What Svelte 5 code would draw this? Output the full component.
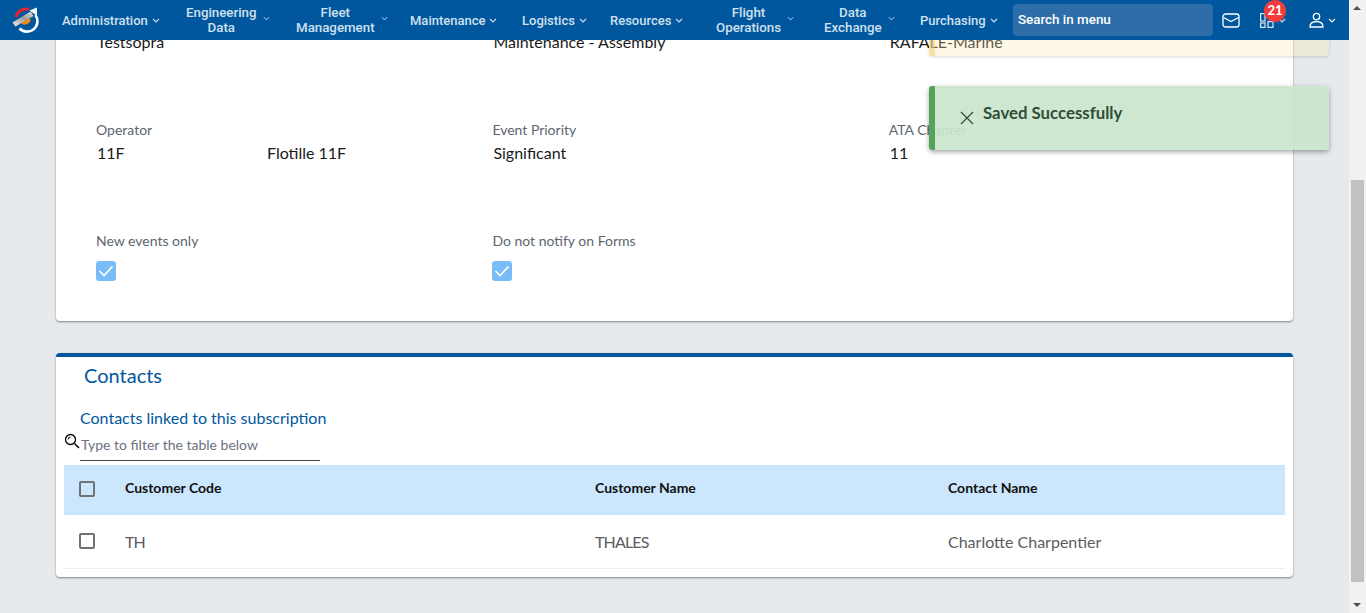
<script>
  const nav = [
    { l: ['Administration'], w: 124 },
    { l: ['Engineering', 'Data'], w: 110 },
    { l: ['Fleet', 'Management'], w: 114 },
    { l: ['Maintenance'], w: 112 },
    { l: ['Logistics'], w: 88 },
    { l: ['Resources'], w: 106 },
    { l: ['Flight', 'Operations'], w: 108 },
    { l: ['Data', 'Exchange'], w: 96 },
    { l: ['Purchasing'], w: 93 }
  ];
</script>

<div class="root">
  <div class="page">
    <header class="nav">
      <svg class="logo" viewBox="10 4 30 30" width="30" height="30">
        <defs>
          <linearGradient id="band" x1="0" y1="1" x2="1" y2="0">
            <stop offset="0" stop-color="#f2f2f2"/>
            <stop offset=".55" stop-color="#9a9a98"/>
            <stop offset="1" stop-color="#e4e6e8"/>
          </linearGradient>
        </defs>
        <path d="M16 16A10.5 10.5 0 0 1 29 8.3" fill="none" stroke="#e8212e" stroke-width="3"/>
        <path d="M19.5 27.5A10.5 10.5 0 0 0 35.5 14" fill="none" stroke="#fff" stroke-width="2.6"/>
        <ellipse cx="26" cy="20.5" rx="4.8" ry="2.7" fill="#f58a12" transform="rotate(-22 26 20.5)"/>
        <path d="M12.5 21.5L30.5 10.5 33.5 15 15.5 25.5Z" fill="url(#band)"/>
        <path d="M29.5 9.5L37 6.5 37 15Z" fill="#f2f4f6"/>
      </svg>
      <nav class="menu">
        {#each nav as n}
          <div class="item" class:two={n.l.length > 1} style="width: {n.w}px">
            <span class="label">{#each n.l as t}<span>{t}</span>{/each}</span>
            <svg class="chev" viewBox="0 0 8 5" width="8" height="5"><path d="M1 1l3 3 3-3" fill="none" stroke="currentColor" stroke-width="1.1"/></svg>
          </div>
        {/each}
      </nav>
      <div class="search">Search in menu</div>
      <div class="icons">
        <svg class="mail" viewBox="0 0 18 15" width="18" height="15"><rect x="1" y="1" width="16" height="13" rx="2.5" fill="none" stroke="#fff" stroke-width="1.3"/><path d="M1.5 4.5L9 8.5l7.5-4" fill="none" stroke="#fff" stroke-width="1.3"/></svg>
        <div class="apps">
          <svg viewBox="0 0 14 16" width="14" height="16"><g fill="none" stroke="#dce8f2" stroke-width="1.2"><rect x=".6" y="1.6" width="4.4" height="7.4"/><rect x=".6" y="11" width="4.4" height="4.4"/><rect x="8" y="9.6" width="5" height="5.8"/></g></svg>
          <svg class="chev c2" viewBox="0 0 8 5" width="8" height="5"><path d="M1 1l3 3 3-3" fill="none" stroke="currentColor" stroke-width="1.1"/></svg>
          <span class="badge">21</span>
        </div>
        <div class="user">
          <svg viewBox="0 0 15 16" width="15" height="16"><circle cx="7.5" cy="4.5" r="3.2" fill="none" stroke="#fff" stroke-width="1.3"/><path d="M1 15c0-4 2.5-5.5 6.5-5.5S14 11 14 15z" fill="none" stroke="#fff" stroke-width="1.3"/></svg>
          <svg class="chev" viewBox="0 0 8 5" width="8" height="5"><path d="M1 1l3 3 3-3" fill="none" stroke="#fff" stroke-width="1.2"/></svg>
        </div>
      </div>
    </header>

    <main class="content">
      <section class="card top">
        <div class="grid">
          <div class="field">
            <div class="label-f">&nbsp;</div>
            <div class="val">Testsopra</div>
          </div>
          <div class="field">
            <div class="label-f">&nbsp;</div>
            <div class="val">Maintenance - Assembly</div>
          </div>
          <div class="field">
            <div class="label-f">&nbsp;</div>
            <div class="val">RAFALE-Marine</div>
          </div>

          <div class="field">
            <div class="label-f">Operator</div>
            <div class="val pair"><span>11F</span><span>Flotille 11F</span></div>
          </div>
          <div class="field">
            <div class="label-f">Event Priority</div>
            <div class="val">Significant</div>
          </div>
          <div class="field">
            <div class="label-f">ATA Chapter</div>
            <div class="val">11</div>
          </div>

          <div class="field">
            <div class="label-f">New events only</div>
            <div class="check"><svg viewBox="0 0 20 20" width="20" height="20"><path d="M3.5 10l4.5 4.5 8.5-9" fill="none" stroke="#fff" stroke-width="1.7"/></svg></div>
          </div>
          <div class="field">
            <div class="label-f">Do not notify on Forms</div>
            <div class="check"><svg viewBox="0 0 20 20" width="20" height="20"><path d="M3.5 10l4.5 4.5 8.5-9" fill="none" stroke="#fff" stroke-width="1.7"/></svg></div>
          </div>
        </div>
      </section>

      <section class="card contacts">
        <h2>Contacts</h2>
        <h3>Contacts linked to this subscription</h3>
        <div class="filter">
          <svg class="lens" viewBox="0 0 16 16" width="16" height="16"><circle cx="6.5" cy="6.5" r="5" fill="none" stroke="#000" stroke-width="1.3"/><path d="M10.5 10.5L15 15" stroke="#000" stroke-width="1.6"/><path d="M4 6.5a2.5 2.5 0 0 1 2.5-2.5" fill="none" stroke="#000" stroke-width="1"/></svg>
          <div class="input">Type to filter the table below</div>
        </div>
        <div class="table">
          <div class="row head">
            <div class="c0"><span class="box"></span></div>
            <div class="c1">Customer Code</div>
            <div class="c2c">Customer Name</div>
            <div class="c3">Contact Name</div>
          </div>
          <div class="row body">
            <div class="c0"><span class="box"></span></div>
            <div class="c1 caps">TH</div>
            <div class="c2c caps">THALES</div>
            <div class="c3">Charlotte Charpentier</div>
          </div>
        </div>
      </section>
    </main>

    <div class="toast warn"></div>
    <div class="toast ok">
      <svg viewBox="0 0 14 14" width="14" height="14"><path d="M1 1l12 12M13 1L1 13" stroke="#2f4f37" stroke-width="1.2"/></svg>
      <strong>Saved Successfully</strong>
    </div>
  </div>

  <aside class="scrollbar">
    <div class="arrow up"></div>
    <div class="track"><div class="thumb"></div></div>
    <div class="arrow down"></div>
  </aside>
</div>

<style>
  :global(body) { margin: 0; }
  .root { display: flex; height: 613px; overflow: hidden; background: #e6eaed; font-family: Lato, "Liberation Sans", sans-serif; }
  .page { flex: 1; position: relative; min-width: 0; overflow: hidden; }

  .nav { position: absolute; z-index: 3; inset: 0 0 auto 0; height: 40px; background: #00579d; display: flex; align-items: center; }
  .logo { margin: 0 0 0 10px; flex: none; }
  .menu { display: flex; align-items: center; margin-left: 22px; }
  .item { display: flex; align-items: center; color: #cfe0ef; font: 500 13px/15px Roboto, sans-serif; white-space: nowrap; gap: 4px; box-sizing: border-box; flex: none; }
  .item.two { gap: 6px; font-size: 13.3px; }
  .item.two .chev { width: 7px; margin-top: -3px; }
  .label { display: flex; flex-direction: column; align-items: center; }
  .chev { flex: none; }
  .search { width: 200px; height: 32px; flex: none; margin-left: auto; box-sizing: border-box; padding-left: 5px; background: #2d6ea8; border-radius: 4px; color: #fff; font: 500 13.4px/32px Roboto, sans-serif; }
  .icons { display: flex; align-items: center; flex: none; width: 136px; box-sizing: border-box; padding-left: 9px; }
  .apps { position: relative; display: flex; align-items: center; gap: 4px; margin-left: 20px; color: #dce8f2; }
  .badge { position: absolute; left: 4px; top: -12px; width: 22px; height: 22px; border-radius: 50%; background: #f03c3c; color: #fff; font: 700 13px/21px Lato, sans-serif; text-align: center; }
  .user { display: flex; align-items: center; gap: 4px; margin-left: 23px; }

  .content { display: flex; flex-direction: column; gap: 32px; padding: 0 56px; margin-top: -64px; }
  .card { background: #fff; border-radius: 4px; box-shadow: 0 1px 2px rgba(0,0,0,.45); }
  .top { height: 385px; box-sizing: border-box; padding: 0 40px; }
  .grid { display: grid; grid-template-columns: repeat(3, 396.4px); grid-auto-rows: 111px; padding-top: 74px; }
  .label-f { font-size: 14px; line-height: 17px; color: #5d6670; }
  .val { font-size: 16px; line-height: 20px; color: #1a1a1a; margin: 5px 0 0 1px; }
  .pair { display: flex; }
  .pair span:first-child { width: 170px; }
  .check { width: 20px; height: 20px; border-radius: 3px; background: #7abcf8; margin-top: 12px; }
  .check svg { display: block; }

  .contacts { border-top: 4px solid #00579d; height: 224px; box-sizing: border-box; padding: 0 8px; }
  h2 { margin: 5px 0 0 20px; font: 400 20px/26px Lato, sans-serif; color: #00579d; }
  h3 { margin: 20px 0 0 16px; font: 400 16px/20px Lato, sans-serif; color: #00579d; }
  .filter { position: relative; margin: 6px 0 0 16px; width: 240px; }
  .lens { position: absolute; left: -16px; top: -1px; }
  .input { height: 27px; line-height: 21px; box-sizing: border-box; font-size: 14px; color: #6b7280; border-bottom: 1px solid #444; padding-left: 1px; }
  .table { margin-top: 4px; }
  .row { display: flex; align-items: center; }
  .head { height: 50px; box-sizing: border-box; padding-bottom: 6px; background: #cbe6fd; font-weight: 700; font-size: 14px; color: #111; }
  .body { height: 53px; border-bottom: 1px solid #eee; font-size: 16px; color: #5c5c5c; }
  .caps { letter-spacing: -.85px; }
  .c0 { width: 61px; padding-left: 15px; box-sizing: border-box; flex: none; }
  .c1 { width: 470px; flex: none; }
  .c2c { width: 353px; flex: none; }
  .box { display: block; width: 12px; height: 12px; border: 2px solid #6f7378; border-radius: 2px; }
  .head .box { margin-top: 3px; }
  .body .box { margin-top: -2px; }

  .toast { position: absolute; z-index: 2; left: 929px; width: 400px; box-sizing: border-box; border-radius: 3px; }
  .warn { top: -8px; height: 64px; background: rgba(255,232,171,.3); border-left: 6px solid rgba(240,205,110,.55); box-shadow: 0 1px 3px rgba(0,0,0,.15); }
  .ok { top: 86px; height: 64px; background: rgba(202,229,204,.93); border-left: 6px solid #55a25a; box-shadow: 0 2px 5px rgba(0,0,0,.35); display: flex; align-items: flex-start; color: #2f4f37; }
  .ok svg { margin: 25px 0 0 25px; flex: none; }
  .ok strong { margin: 17px 0 0 9px; font-size: 16.8px; line-height: 20px; }

  .scrollbar { width: 17px; flex: none; background: #f1f1f1; display: flex; flex-direction: column; }
  .arrow { height: 17px; flex: none; position: relative; }
  .arrow::after { content: ""; position: absolute; left: 4px; border-left: 4px solid transparent; border-right: 4px solid transparent; }
  .up::after { top: 6px; border-bottom: 4px solid #505050; }
  .down::after { top: 7px; border-top: 4px solid #505050; }
  .track { flex: 1; padding: 0 2px 14px; display: flex; flex-direction: column; justify-content: flex-end; }
  .thumb { height: 402px; background: #c1c1c1; }
</style>
